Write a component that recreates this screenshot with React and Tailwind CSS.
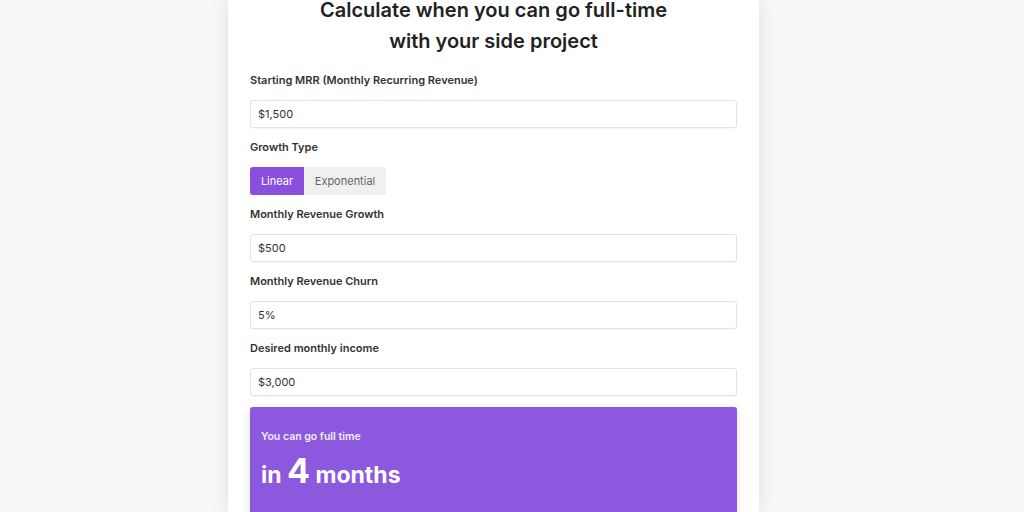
import React, { useState } from "react";

function Field({ label, value, onChange }) {
  return (
    <div className="mt-[11px]">
      <label className="block text-[11px] leading-4 font-semibold text-[#333]">{label}</label>
      <input
        className="mt-3 block w-full h-[28px] px-[7px] text-[11px] text-[#333] bg-white border border-[#e2e2e2] rounded-[3px] shadow-[0_1px_1px_rgba(0,0,0,0.03)] outline-none"
        value={value}
        onChange={(e) => onChange(e.target.value)}
      />
    </div>
  );
}

export default function App() {
  const [mrr, setMrr] = useState("$1,500");
  const [type, setType] = useState("linear");
  const [growth, setGrowth] = useState("$500");
  const [churn, setChurn] = useState("5%");
  const [income, setIncome] = useState("$3,000");

  return (
    <div
      className="h-[512px] overflow-hidden bg-[#f8f8f8] flex justify-center"
      style={{ fontFamily: "Inter, 'Noto Sans', sans-serif" }}
    >
      <div className="w-[531px] ml-[-37px] bg-white shadow-[0_0_18px_rgba(0,0,0,0.10)] px-[22px]">
        <h1 className="text-center text-[20px] font-semibold text-[#222]">
          <span className="block leading-[21px]">Calculate when you can go full-time</span>
          <span className="block mt-[5px] leading-[31px]">with your side project</span>
        </h1>

        <div className="mt-[15px]">
          <label className="block text-[11px] leading-4 font-semibold text-[#333]">
            Starting MRR (Monthly Recurring Revenue)
          </label>
          <input
            className="mt-3 block w-full h-[28px] px-[7px] text-[11px] text-[#333] bg-white border border-[#e2e2e2] rounded-[3px] shadow-[0_1px_1px_rgba(0,0,0,0.03)] outline-none"
            value={mrr}
            onChange={(e) => setMrr(e.target.value)}
          />
        </div>

        <div className="mt-[11px]">
          <label className="block text-[11px] leading-4 font-semibold text-[#333]">Growth Type</label>
          <div className="mt-3 flex h-[28px] text-[11px]">
            <button
              onClick={() => setType("linear")}
              className={
                type === "linear"
                  ? "w-[54px] bg-[#8a4fdc] text-white rounded-l-[3px]"
                  : "w-[54px] bg-[#f0f0f0] text-[#666] rounded-l-[3px]"
              }
            >
              Linear
            </button>
            <button
              onClick={() => setType("exponential")}
              className={
                type === "exponential"
                  ? "w-[82px] bg-[#8a4fdc] text-white rounded-r-[3px]"
                  : "w-[82px] bg-[#f0f0f0] text-[#666] rounded-r-[3px]"
              }
            >
              Exponential
            </button>
          </div>
        </div>

        <Field label="Monthly Revenue Growth" value={growth} onChange={setGrowth} />
        <Field label="Monthly Revenue Churn" value={churn} onChange={setChurn} />
        <Field label="Desired monthly income" value={income} onChange={setIncome} />

        <div className="mt-[11px] h-[130px] bg-[#8b58de] rounded-t-[3px] shadow-[0_2px_8px_rgba(0,0,0,0.12)] px-[11px] pt-[22px] text-white">
          <p className="text-[10.5px] leading-4 font-semibold text-white/90">You can go full time</p>
          <p className="mt-[8px] font-bold leading-[36px] text-[23px]">
            in <span className="text-[34px]">4</span> months
          </p>
        </div>
      </div>
    </div>
  );
}
